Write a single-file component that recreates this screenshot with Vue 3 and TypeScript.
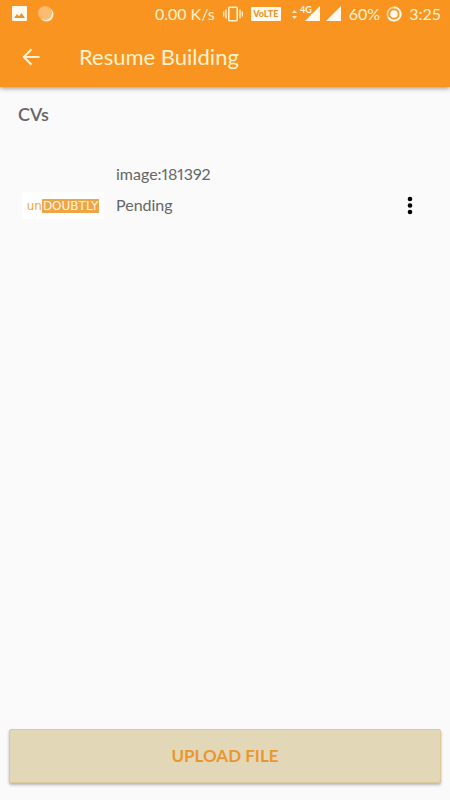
<script setup lang="ts">
interface CvFile {
  name: string
  status: string
}

const files: CvFile[] = [{ name: 'image:181392', status: 'Pending' }]
</script>

<template>
  <div class="screen">
    <header class="top">
      <div class="status">
        <svg class="pic" width="15" height="15" viewBox="0 0 15 15" aria-hidden="true">
          <rect width="15" height="15" rx="1" fill="#fffaf0" />
          <path d="M2 12l3-4 2 2.300 2.500-3.300 3.500 5z" fill="#e8952a" />
        </svg>
        <svg class="moon" width="16" height="16" viewBox="0 0 16 16" aria-hidden="true">
          <circle cx="8.500" cy="8.500" r="7" fill="#fff3d6" />
          <circle cx="7" cy="7" r="7" fill="#fdbb70" />
        </svg>
        <span class="speed">0.00 K/s</span>
        <svg class="vibrate" width="20" height="16" viewBox="0 0 20 16" fill="none" stroke="#fff3cf" aria-hidden="true">
          <rect x="5.800" y="1.300" width="8.400" height="13.400" rx="1" stroke-width="1.600" />
          <path d="M3 3.500v9M17 3.500v9M.7 5.500v5M19.300 5.500v5" stroke-width="1.300" />
        </svg>
        <span class="volte">VoLTE</span>
        <svg class="signal" width="49" height="18" viewBox="0 0 49 18" fill="#fffaf0" aria-hidden="true">
          <path d="M0 8l2.500-3L5 8zM0 11h5l-2.500 3z" fill="#ffe9bd" />
          <path d="M28 1v15H13l6-6v-1h1z" />
          <path d="M49 1v15H34z" />
          <text x="8" y="8" class="net">4G</text>
        </svg>
        <span class="percent">60%</span>
        <svg class="battery" width="16" height="16" viewBox="0 0 16 16" aria-hidden="true">
          <circle cx="8" cy="8" r="6.600" fill="none" stroke="#ffd391" stroke-width="1.900" />
          <path d="M8 1.400a6.600 6.600 0 1 1-5.700 9.900" fill="none" stroke="#fffaf0" stroke-width="1.900" />
          <circle cx="8" cy="8" r="3.800" fill="#fffaf0" />
        </svg>
        <time class="clock">3:25</time>
      </div>
      <div class="toolbar">
        <button class="icon-button back" type="button" aria-label="Back">
          <svg width="18" height="18" viewBox="0 0 18 18" fill="none" stroke="#fff3d6" stroke-width="2">
            <path d="M17.500 9H2M9.500 1.300L1.800 9l7.700 7.700" />
          </svg>
        </button>
        <h1>Resume Building</h1>
      </div>
    </header>

    <main>
      <h2>CVs</h2>
      <ul>
        <li v-for="file in files" :key="file.name" class="row">
          <div class="thumb"><span>un</span><span class="rest">DOUBTLY</span></div>
          <p class="name">{{ file.name }}</p>
          <p class="state">{{ file.status }}</p>
          <button class="icon-button more" type="button" aria-label="More options">
            <svg width="6" height="20" viewBox="0 0 6 20" fill="#000">
              <circle cx="3" cy="3" r="2.300" />
              <circle cx="3" cy="9.500" r="2.300" />
              <circle cx="3" cy="16" r="2.300" />
            </svg>
          </button>
        </li>
      </ul>
    </main>

    <footer>
      <button class="upload" type="button">UPLOAD FILE</button>
    </footer>
  </div>
</template>

<style>
body {
  margin: 0;
  background: #fafafa;
}
</style>

<style scoped>
.screen {
  display: flex;
  flex-direction: column;
  min-height: 100vh;
  background: #fafafa;
  color: #666;
  font-family: Lato, "Liberation Sans", sans-serif;
}

.top {
  background: #f99420;
  box-shadow: 0 1px 5px rgba(0, 0, 0, 0.45);
  color: #fff3cf;
}

.status {
  display: flex;
  align-items: center;
  height: 27px;
  padding: 0 9px 0 12px;
  font-size: 16px;
  line-height: 26px;
  white-space: nowrap;
}

.status svg {
  flex: none;
}

.moon {
  margin-left: 11px;
}

.speed {
  margin-left: auto;
}

.vibrate {
  margin-left: 8px;
}

.volte {
  width: 30px;
  height: 14px;
  margin-left: 8px;
  border-radius: 1px;
  background: #fffaf0;
  color: #e8952a;
  font-size: 9px;
  font-weight: 900;
  line-height: 14px;
  text-align: center;
}

.signal {
  margin-left: 11px;
}

.net {
  font-size: 9px;
  font-weight: 700;
}

.percent {
  margin-left: 8px;
}

.battery {
  margin-left: 6px;
}

.clock {
  margin-left: 7px;
}

.toolbar {
  display: flex;
  align-items: center;
  height: 60px;
  padding: 0 16px;
}

.icon-button {
  display: flex;
  align-items: center;
  justify-content: center;
  width: 30px;
  height: 30px;
  padding: 0;
  border: 0;
  background: none;
  cursor: pointer;
}

h1 {
  margin: 0 0 0 33px;
  font-size: 22px;
  font-weight: 400;
  line-height: 28px;
}

main {
  flex: 1;
  padding: 16px 18px;
}

h2 {
  margin: 0;
  padding-bottom: 2px;
  font-size: 18px;
  font-weight: 600;
  line-height: 22px;
}

ul {
  margin: 32px 0 0;
  padding: 0;
  list-style: none;
}

.row {
  display: grid;
  grid-template-columns: 82px 1fr 30px;
  grid-template-rows: 31px 31px;
  column-gap: 12px;
  align-items: center;
  padding: 0 7px 0 4px;
}

.row p {
  grid-column: 2;
  margin: 0;
  padding-bottom: 2px;
  font-size: 16px;
  font-variant-numeric: proportional-nums;
  line-height: 22px;
}

.name {
  grid-row: 1;
}

.state {
  grid-row: 2;
}

.thumb {
  display: flex;
  grid-row: 2;
  grid-column: 1;
  align-items: center;
  justify-content: center;
  height: 27px;
  background: #fff;
  color: #efa544;
  font-family: "DejaVu Sans", sans-serif;
  font-size: 12px;
  line-height: 14px;
}

.rest {
  padding: 0 1px;
  background: #f0a544;
  color: #fff6e4;
}

.more {
  grid-row: 2;
  grid-column: 3;
}

footer {
  padding: 8px 9px 17px;
}

.upload {
  display: block;
  width: 100%;
  height: 54px;
  padding: 0 0 2px;
  border: 1px solid #dfc79c;
  border-radius: 2px;
  background: #e2d8b8;
  box-shadow: 0 2px 3px rgba(0, 0, 0, 0.28);
  color: #ea962f;
  font-family: inherit;
  font-size: 17px;
  font-weight: 700;
  cursor: pointer;
}
</style>
